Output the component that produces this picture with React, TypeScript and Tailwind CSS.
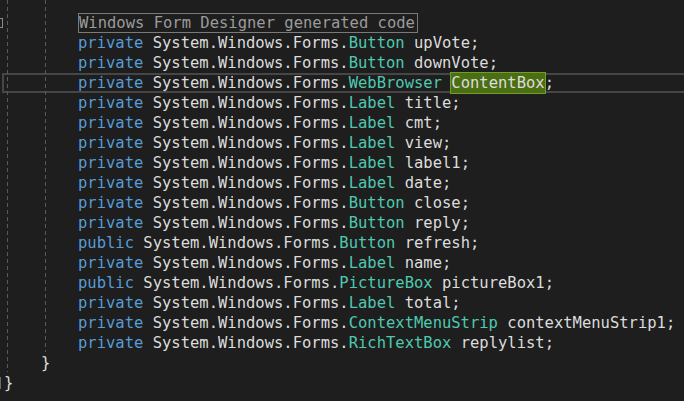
import React from 'react';

type Field = { access: string; type: string; name: string; highlight?: boolean };

const fields: Field[] = [
  { access: 'private', type: 'Button', name: 'upVote' },
  { access: 'private', type: 'Button', name: 'downVote' },
  { access: 'private', type: 'WebBrowser', name: 'ContentBox', highlight: true },
  { access: 'private', type: 'Label', name: 'title' },
  { access: 'private', type: 'Label', name: 'cmt' },
  { access: 'private', type: 'Label', name: 'view' },
  { access: 'private', type: 'Label', name: 'label1' },
  { access: 'private', type: 'Label', name: 'date' },
  { access: 'private', type: 'Button', name: 'close' },
  { access: 'private', type: 'Button', name: 'reply' },
  { access: 'public', type: 'Button', name: 'refresh' },
  { access: 'private', type: 'Label', name: 'name' },
  { access: 'public', type: 'PictureBox', name: 'pictureBox1' },
  { access: 'private', type: 'Label', name: 'total' },
  { access: 'private', type: 'ContextMenuStrip', name: 'contextMenuStrip1' },
  { access: 'private', type: 'RichTextBox', name: 'replylist' },
];

const guide =
  'absolute w-px bg-[repeating-linear-gradient(to_bottom,#5a5a5a_0px,#5a5a5a_4px,transparent_4px,transparent_7px)]';

export default function App() {
  return (
    <div
      className="relative w-[684px] h-[401px] overflow-hidden bg-[#1e1e1e] text-[#dcdcdc] text-[15.5px] leading-[20px]"
      style={{ fontFamily: '"DejaVu Sans Mono", monospace' }}
    >
      {/* indent guides */}
      <div className={`${guide} left-[7px] top-0 h-[372px]`} />
      <div className={`${guide} left-[45px] top-0 h-[352px]`} />
      {/* outlining markers */}
      <div className="absolute left-0 top-[18px] w-[3px] h-[10px] border border-l-0 border-[#8a8a8a]" />
      <div className="absolute left-0 top-[377px] w-px h-[12px] bg-[#6a6a6a]" />

      <div className="flex flex-col pt-[13px] pl-[4px]">
        <div className="h-[20px] pl-[74px] flex">
          <span className="whitespace-pre border border-[#7a7a7a] text-[#9b9b9b] leading-[18px] pr-[2px]">
            Windows Form Designer generated code
          </span>
        </div>
        {fields.map((f) => (
          <div
            key={f.name}
            className={
              f.highlight
                ? 'h-[20px] -ml-[2px] pl-[74px] whitespace-pre border-y-2 border-l-2 border-[#464646] leading-[16px] flex items-center'
                : 'h-[20px] pl-[74px] whitespace-pre'
            }
          >
            <span className="text-[#569cd6]">{f.access}</span>
            <span> System.Windows.Forms.</span>
            <span className="text-[#4ec9b0]">{f.type}</span>
            <span> </span>
            {f.highlight ? (
              <span className="bg-[#4b6e12] outline outline-1 outline-[#6f9e2a] leading-[20px]">{f.name}</span>
            ) : (
              <span>{f.name}</span>
            )}
            <span>;</span>
          </div>
        ))}
        <div className="h-[20px] pl-[37px] whitespace-pre">{'}'}</div>
        <div className="h-[20px] whitespace-pre">{'}'}</div>
      </div>
    </div>
  );
}
